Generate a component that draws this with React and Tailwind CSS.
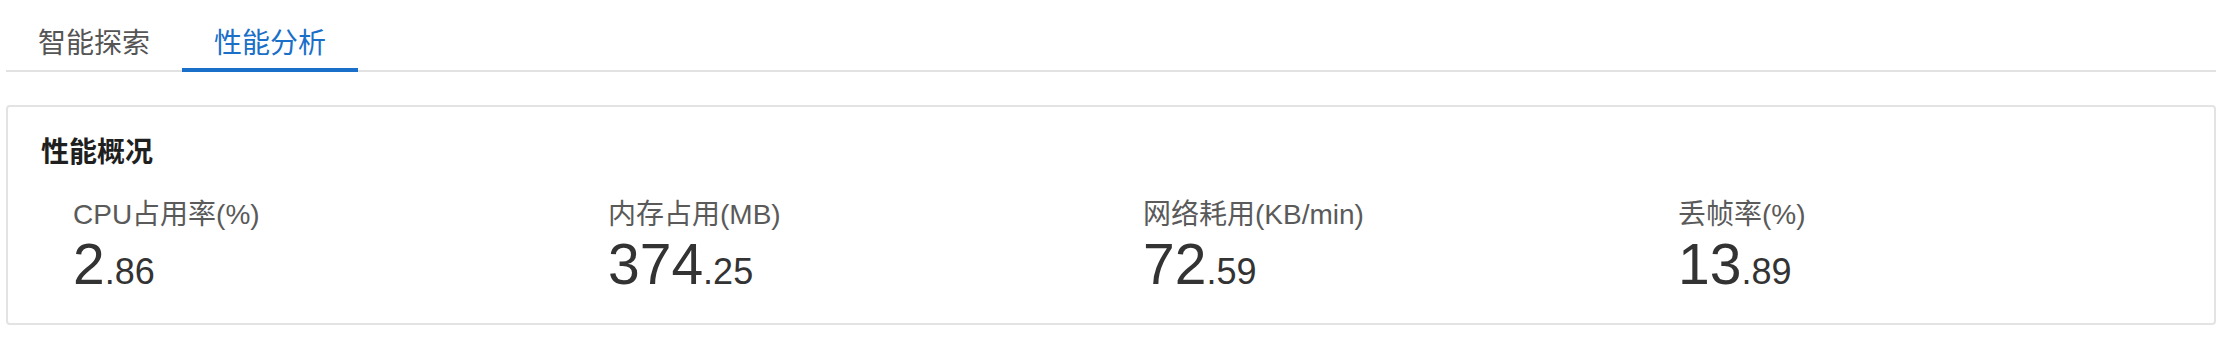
import React from "react";

const font = { fontFamily: '"Liberation Sans", "Noto Sans CJK SC", sans-serif' };

const metrics = [
  { label: "CPU占用率(%)", int: "2", dec: ".86" },
  { label: "内存占用(MB)", int: "374", dec: ".25" },
  { label: "网络耗用(KB/min)", int: "72", dec: ".59" },
  { label: "丢帧率(%)", int: "13", dec: ".89" },
];

export default function App() {
  return (
    <div className="w-[2234px] h-[342px] bg-white" style={font}>
      <div className="mx-[6px] w-[2210px] flex border-b-2 border-[#e2e2e2] h-[72px]">
        <div className="w-[176px] flex items-end justify-center text-[28px] leading-[34px] text-[#555555] pb-[9px]">
          智能探索
        </div>
        <div className="w-[176px] flex items-end justify-center text-[28px] leading-[34px] text-[#1a6fc8] border-b-4 border-[#1a6fc8] -mb-[2px] pb-[7px]">
          性能分析
        </div>
      </div>
      <div className="ml-[6px] mt-[33px] w-[2210px] h-[220px] border-2 border-[#e3e3e3] rounded-[4px] px-[33px] pt-[25px]">
        <div className="text-[28px] font-bold text-[#1f1f1f] leading-[42px]">性能概况</div>
        <div className="grid grid-cols-4 mt-[23px]">
          {metrics.map((m) => (
            <div key={m.label} className="pl-[32px]">
              <div className="text-[28px] text-[#5a5a5a] leading-[36px]">{m.label}</div>
              <div className="flex items-baseline text-[#333333] leading-[60px] mt-[1px]">
                <span className="text-[57px]">{m.int}</span>
                <span className="text-[36px]">{m.dec}</span>
              </div>
            </div>
          ))}
        </div>
      </div>
    </div>
  );
}
